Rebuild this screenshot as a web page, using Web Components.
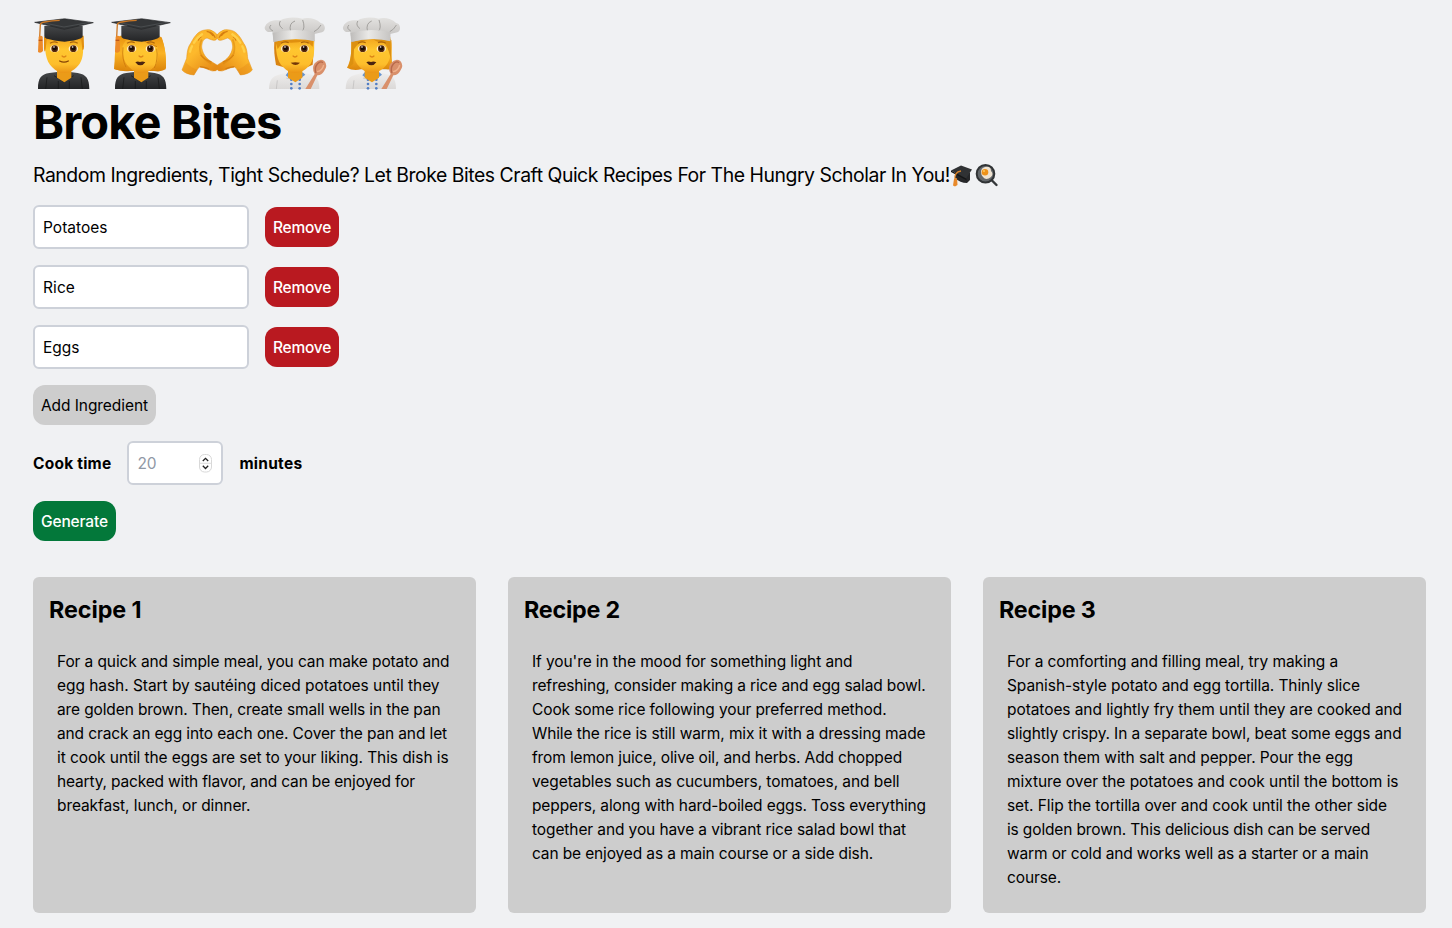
<!DOCTYPE html>
<html lang="en">
<head>
<meta charset="utf-8">
<title>Broke Bites</title>
<style>
body{margin:0;background:#f0f1f3;color:#000;font-family:Inter,"Liberation Sans",sans-serif;}
</style>
</head>
<body>
<bites-app></bites-app>

<template id="t-app">
<style>
:host{display:flex;flex-direction:column;align-items:flex-start;box-sizing:border-box;height:928px;padding:10px 26px 15px 33px;font-size:15.5px;line-height:24px;--drop:1px}
.emojis{display:flex;margin-left:-8px;height:85px}
h1{margin:3px 0 0;font-size:47px;line-height:48px;font-weight:750;--drop:0px}
.sub{display:flex;align-items:center;height:28px;margin:15px 0 16px;font-size:19.4px;line-height:28px;--drop:0px}
form{display:flex;flex-direction:column;align-items:flex-start;gap:16px;margin:0}
.row{display:flex;align-items:center;gap:16px;font-weight:700}
.grid{display:grid;grid-template-columns:repeat(3,1fr);gap:32px;width:100%;margin-top:36px;flex:1}
</style>
<div class="emojis">
<emoji-pic kind="grad-man"></emoji-pic><emoji-pic kind="grad-woman"></emoji-pic><emoji-pic kind="hands"></emoji-pic><emoji-pic kind="cook"></emoji-pic><emoji-pic kind="cook-woman"></emoji-pic>
</div>
<h1><fit-line width="248.500">Broke Bites</fit-line></h1>
<div class="sub"><fit-line width="917">Random Ingredients, Tight Schedule? Let Broke Bites Craft Quick Recipes For The Hungry Scholar In You!</fit-line><emoji-pic kind="cap"></emoji-pic><emoji-pic kind="pan"></emoji-pic></div>
<form>
<ingredient-row>Potatoes</ingredient-row>
<ingredient-row>Rice</ingredient-row>
<ingredient-row>Eggs</ingredient-row>
<app-button tone="gray"><fit-line width="107">Add Ingredient</fit-line></app-button>
<div class="row"><fit-line width="78.4">Cook time</fit-line><number-box>20</number-box><fit-line width="63">minutes</fit-line></div>
<app-button tone="green"><fit-line width="67">Generate</fit-line></app-button>
</form>
<div class="grid">
<recipe-card><fit-line slot="title" width="92.5">Recipe 1</fit-line>
<fit-line width="392.5">For a quick and simple meal, you can make potato and</fit-line>
<fit-line width="382.5">egg hash. Start by sautéing diced potatoes until they</fit-line>
<fit-line width="383.5">are golden brown. Then, create small wells in the pan</fit-line>
<fit-line width="390">and crack an egg into each one. Cover the pan and let</fit-line>
<fit-line width="391.5">it cook until the eggs are set to your liking. This dish is</fit-line>
<fit-line width="358">hearty, packed with flavor, and can be enjoyed for</fit-line>
<fit-line width="193.5">breakfast, lunch, or dinner.</fit-line>
</recipe-card>
<recipe-card><fit-line slot="title" width="96">Recipe 2</fit-line>
<fit-line width="320.5">If you're in the mood for something light and</fit-line>
<fit-line width="393.5">refreshing, consider making a rice and egg salad bowl.</fit-line>
<fit-line width="354.5">Cook some rice following your preferred method.</fit-line>
<fit-line width="393.5">While the rice is still warm, mix it with a dressing made</fit-line>
<fit-line width="370">from lemon juice, olive oil, and herbs. Add chopped</fit-line>
<fit-line width="367.5">vegetables such as cucumbers, tomatoes, and bell</fit-line>
<fit-line width="394">peppers, along with hard-boiled eggs. Toss everything</fit-line>
<fit-line width="374">together and you have a vibrant rice salad bowl that</fit-line>
<fit-line width="341">can be enjoyed as a main course or a side dish.</fit-line>
</recipe-card>
<recipe-card><fit-line slot="title" width="96.5">Recipe 3</fit-line>
<fit-line width="331">For a comforting and filling meal, try making a</fit-line>
<fit-line width="353">Spanish-style potato and egg tortilla. Thinly slice</fit-line>
<fit-line width="395">potatoes and lightly fry them until they are cooked and</fit-line>
<fit-line width="394.5">slightly crispy. In a separate bowl, beat some eggs and</fit-line>
<fit-line width="346">season them with salt and pepper. Pour the egg</fit-line>
<fit-line width="391.5">mixture over the potatoes and cook until the bottom is</fit-line>
<fit-line width="380">set. Flip the tortilla over and cook until the other side</fit-line>
<fit-line width="363">is golden brown. This delicious dish can be served</fit-line>
<fit-line width="361.5">warm or cold and works well as a starter or a main</fit-line>
<fit-line width="54">course.</fit-line>
</recipe-card>
</div>
</template>

<script>
const define=(name,markup,setup)=>customElements.define(name,class extends HTMLElement{
  connectedCallback(){
    if(this.shadowRoot)return;
    this.attachShadow({mode:"open"}).innerHTML=typeof markup==="function"?markup(this):markup;
    if(setup)setup(this);
  }
});

/* One line of text, tracked to a given advance width. */
define("fit-line",`<style>:host{display:block;white-space:nowrap}span{display:inline-block;transform:translateY(var(--drop,0px))}</style><span><slot></slot></span>`,el=>{
  const s=el.shadowRoot.querySelector("span"),n=el.textContent.length;
  el.fit=()=>{s.style.letterSpacing="0";const w=s.getBoundingClientRect().width;if(w)s.style.letterSpacing=((+el.getAttribute("width")-w)/n).toFixed(4)+"px"};
});

define("app-button",`<style>
:host{display:block}
button{display:block;margin:0;border:0;border-radius:12px;padding:8px;height:40px;font:inherit;line-height:24px;font-weight:550;color:#fff;background:#b91920}
:host([tone=gray]) button{background:#cdcdcd;color:#000;font-weight:400}
:host([tone=green]) button{background:#03783a}
</style><button type="button"><slot></slot></button>`);

define("ingredient-row",el=>{
  const text=el.textContent,w={Potatoes:64.5,Rice:32,Eggs:36.5}[text];
  return `<style>
:host{display:flex;align-items:center;gap:16px}
.field{box-sizing:border-box;width:216px;height:44px;border:2px solid #cdd1d9;border-radius:6px;background:#fff;padding:8px}
</style><div class="field"><fit-line width="${w}">${text}</fit-line></div><app-button><fit-line width="58">Remove</fit-line></app-button>`});

define("number-box",`<style>
:host{display:flex;box-sizing:border-box;width:96px;height:44px;border:2px solid #cdd1d9;border-radius:6px;background:#fff;padding:8px;color:#9098a5;font-weight:400;justify-content:space-between;align-items:center}
span{display:block;transform:translateY(1px)}
svg{display:block;width:15px;height:20px}
</style><span><slot></slot></span><svg viewBox="0 0 15 20"><rect x="1.5" y="1.500" width="12" height="17.5" rx="5" fill="#fff" stroke="#d8d8d8" stroke-width="1"/><path d="M1.5 10.300h12" stroke="#ddd"/><path d="M4.8 8l2.700-2.700 2.700 2.700M4.8 12.800l2.700 2.700 2.700-2.700" fill="none" stroke="#222" stroke-width="1.3"/></svg>`);

define("recipe-card",`<style>
:host{display:block;box-sizing:border-box;background:#cdcdcd;border-radius:6px;padding:16px}
h2{margin:0 0 16px;font-size:23.3px;line-height:32px;font-weight:700}
div{padding:8px}
</style><h2><slot name="title"></slot></h2><div><slot></slot></div>`);

const defs=`<defs>
<linearGradient id="skin" x2="0" y2="1"><stop offset="0" stop-color="#f2a31d"/><stop offset=".35" stop-color="#ffc62f"/><stop offset=".75" stop-color="#fdbe2c"/><stop offset="1" stop-color="#ea9415"/></linearGradient>
<linearGradient id="hair" x2="0" y2="1"><stop offset="0" stop-color="#e8940f"/><stop offset=".5" stop-color="#fbb324"/><stop offset="1" stop-color="#dc860c"/></linearGradient>
<linearGradient id="dark" x2="0" y2="1"><stop offset="0" stop-color="#444648"/><stop offset="1" stop-color="#232426"/></linearGradient>
<linearGradient id="hat" x2="0" y2="1"><stop offset="0" stop-color="#e3e2e0"/><stop offset=".65" stop-color="#cbc9c7"/><stop offset="1" stop-color="#b0adaa"/></linearGradient>
<linearGradient id="band"><stop offset="0" stop-color="#bebcba"/><stop offset=".45" stop-color="#eae9e7"/><stop offset="1" stop-color="#c6c4c2"/></linearGradient>
<linearGradient id="coat" x2="0" y2="1"><stop offset="0" stop-color="#efeeed"/><stop offset="1" stop-color="#dbd9d8"/></linearGradient>
<linearGradient id="hand" x2=".7" y2="1"><stop offset="0" stop-color="#f9b42a"/><stop offset=".5" stop-color="#fdb92c"/><stop offset="1" stop-color="#e58a16"/></linearGradient>
</defs>`;
const eyes=`<g><ellipse cx="89" cy="116" rx="14" ry="11" fill="#fff0cc"/><ellipse cx="145" cy="116" rx="14" ry="11" fill="#fff0cc"/><circle cx="89" cy="116" r="10" fill="#5b2b0d"/><circle cx="145" cy="116" r="10" fill="#5b2b0d"/><circle cx="89" cy="115" r="6.5" fill="#180d08"/><circle cx="145" cy="115" r="6.5" fill="#180d08"/><circle cx="87" cy="111" r="2.4" fill="#fff"/><circle cx="143" cy="111" r="2.4" fill="#fff"/><path d="M110 137q7 8 14 0" fill="none" stroke="#dc8517" stroke-width="4"/></g>`;
const brows=`<path d="M75 100q12-8 23-2M135 98q12-6 23 2" fill="none" stroke="#ab640b" stroke-width="3.5"/>`;
const smile=`<path d="M104 153q13 7 26 0" fill="none" stroke="#864306" stroke-width="4" stroke-linecap="round"/>`;
const lips=`<path d="M97 157q7-5 14-1 7-4 16 1-6 9-15 9t-15-9z" fill="#4a2410"/>`;
const face=`<path d="M96 175h43v28l-21 14-22-14z" fill="#eb9b18"/><path d="M60 82C58 119 62 154 81 171 95 184 105 190 117 189 139 187 151 178 164 161 176 145 176 115 173 82z" fill="url(#skin)"/>`;
const gown=`<path d="M39 237c0-34 10-44 34-48l24-3 19 25 19-25 23 3c25 4 35 17 35 48z" fill="url(#dark)"/><path d="M66 202l-4 35M168 202l4 35M87 197l29 18 30-18M100 213v24M133 213v24" fill="none" stroke="#151617" stroke-width="2"/><path d="M96 184l21 27 20-27z" fill="#efa31e"/>`;
const cap=`<path d="M58 48v30q1 8 12 9 20 5 35 7l14 1 15-2q27-3 39-12V48z" fill="url(#dark)"/><path d="M29 37l83-10q7-1 13 0l80 11-87 20z" fill="#343638" stroke="#242527" stroke-width="2"/><path d="M43 36l74 15 77-14" fill="none" stroke="#55585a" stroke-width="2"/><path d="M104 31q-23 1-45 5-12 2-13 8l-2 37" fill="none" stroke="#cd7926" stroke-width="4"/><path d="M41 80q7-5 12 0l1 43q-7 8-15 3z" fill="#ed8a29"/><path d="M41 91h11" stroke="#bd5718" stroke-width="4"/>`;
const chefHat=`<path d="M49 65C30 71 22 54 28 48 34 33 54 29 73 31 91 21 117 20 139 26 156 21 180 25 194 39 208 40 212 62 198 67L175 72v20q-60-12-121 3z" fill="url(#hat)"/><path d="M51 63Q35 55 45 45M80 56Q65 46 73 33M104 65q-7-25 13-32M137 65q12-10 3-35M174 65q12-5 21-20" fill="none" stroke="#a19f9c" stroke-width="3"/><path d="M50 69q62-17 126-2v27q-60-15-124 2z" fill="url(#band)"/>`;
const coat=`<path d="M39 237c1-29 11-38 29-43l28-7 22 21 22-21 28 7c16 7 22 18 22 43z" fill="url(#coat)"/><path d="M96 187l12 11 11 5 10-5 11-11 8 7-17 13-14-4-13 4-15-11z" fill="#6594d0"/><path d="M91 204q13 5 45 2M64 211l-3 26" fill="none" stroke="#bbbab9" stroke-width="2"/><g fill="#527ec4"><circle cx="106" cy="209" r="4"/><circle cx="131" cy="209" r="4"/><circle cx="106" cy="222" r="4"/><circle cx="131" cy="222" r="4"/><circle cx="106" cy="235" r="4"/><circle cx="131" cy="235" r="4"/></g>`;
const spoon=`<path d="M148 237l28-45q-10-17 0-32 15-17 29-7 12 13-1 31-8 13-20 12l-20 41z" fill="#d9906b"/><path d="M180 189q-6-15 4-27 9-10 17-4" fill="none" stroke="#b8694b" stroke-width="4"/><path d="M183 185q16-2 20-20" fill="none" stroke="#f0b18c" stroke-width="4"/>`;
const hand=`<path d="M12 180L26 145C27 132 28 113 38 100 51 75 63 62 80 60q17-4 29 6 9 5 10 14-2 12-13 11-11-3-19-7C74 88 72 98 71 111c2 14 8 28 22 39 8 5 15 10 24 15q7 10-3 17-10 4-25-4-13-6-24-7-6 5-10 12l-7 12q-25-2-36-15z" fill="url(#hand)" stroke="#e38f17" stroke-width="1.5"/><path d="M86 64q12 2 19 14M95 65q10 4 17 18M68 135q11 14 32 21M66 170q19 2 27 8M70 80q-7 3-9 12" fill="none" stroke="#d67e10" stroke-width="3.5"/><path d="M71 88q-9 22-3 43 10 19 32 30" fill="none" stroke="#d9850f" stroke-opacity=".55" stroke-width="5"/><path d="M48 98q9-15 24-25M36 125q2-10 6-16" fill="none" stroke="#ffd04a" stroke-width="7" stroke-linecap="round"/><path d="M14 179l10-21q17 16 35 21l-11 16q-22-2-34-16z" fill="#e38716" fill-opacity=".35"/>`;
const art={
"grad-man":[0,`${gown}${face}<path d="M57 80v37q2 15 5 1l3-30h104l3 31q4 5 5-9l-1-33z" fill="#e2900f"/>${eyes}${brows}${smile}${cap}`],
"grad-woman":[0,`<path d="M52 77C39 101 39 141 33 177q25 9 48 6h72q20 4 35-5c3-30-1-71-15-98z" fill="url(#hair)"/><g transform="translate(-3 0)">${gown}${face}</g><path d="M50 79l26 5q-18 15-20 38-3 34 12 55-14 8-34 0c2-30-1-57 12-98zM108 80q20 20 55 30 7 35-8 66 18 9 34-2c1-42-4-66-13-92z" fill="url(#hair)"/><path d="M110 84q24 18 52 26M60 112q-4 35 9 60M161 116q5 33-7 58" fill="none" stroke="#cc7a0c" stroke-width="2.500"/><g transform="translate(-3 0)">${eyes}${brows}</g>${lips}<g transform="translate(-3 0)">${cap}</g>`],
"hands":[9,`${hand}<g transform="translate(235 0) scale(-1 1)">${hand}</g>`],
"cook":[9,`<path d="M55 92c-2 28 1 50 5 73l21 6h74l15-7 5-74z" fill="#d98412"/>${coat}${face}<path d="M57 90h115l-2 20q-10-10-22-17-35 8-68 3L65 117z" fill="#e0900f"/>${eyes}${brows}<path d="M104 158q14-3 28 0-13 14-28 0z" fill="#733708"/>${chefHat}${spoon}`],
"cook-woman":[9,`<path d="M52 90c1 36-1 62-13 83q17 10 42 5h75q20 2 22-8c-9-18-2-49-6-80z" fill="url(#hair)"/><g transform="translate(-4 0)">${coat}${face}</g><path d="M52 90h48q-28 6-40 28l-2 43-15 12c10-32 9-56 9-83zM117 88h53l2 67q-6-35-20-56-21 0-35-11z" fill="#dc9010"/><g transform="translate(-3 0)">${eyes}${brows}</g>${lips}<g transform="translate(2 0) scale(.95 1)">${chefHat}</g><g transform="translate(-6 0)">${spoon}</g>`]};
define("emoji-pic",el=>{
  const k=el.getAttribute("kind");
  if(k==="cap")return `<style>:host{display:block}svg{display:block}</style><svg width="25" height="28" viewBox="0 0 25 28"><path d="M5 11v6q5 5 12 5l3-3v-7z" fill="#262729"/><path d="M1 9.500l10-5 11 4-6 9z" fill="#303234"/><path d="M1 9.500l15 8 1 2-2-1L1 11z" fill="#151617"/><path d="M11 10Q4 11 5 19" fill="none" stroke="#db842a" stroke-width="1.3"/><path d="M4 18l3-1 .5 7-2.500 1.500-2-1z" fill="#e8892b"/></svg>`;
  if(k==="pan")return `<style>:host{display:block}svg{display:block}</style><svg width="25" height="28" viewBox="0 0 25 28"><path d="M15.5 18l6 6" stroke="#35383a" stroke-width="2.400" stroke-linecap="round"/><circle cx="10.500" cy="12.800" r="8.800" fill="#63676a" stroke="#303335" stroke-width="2"/><path d="M6 11q0-4 4-5 6-1 6 4 3 3 0 6-5 4-8 0-2-2-2-5z" fill="#efe3d2"/><circle cx="10" cy="11.300" r="3.300" fill="#ee9219"/><circle cx="9" cy="10" r="1" fill="#ffc95c"/></svg>`;
  const [x,body]=art[k];
  return `<style>:host{display:block;width:78px;height:85px}svg{display:block}</style><svg width="78" height="85" viewBox="${x} 0 234 255">${defs}<g>${body}</g></svg>`;
});

define("bites-app",document.getElementById("t-app").innerHTML);

const fitAll=root=>root.querySelectorAll("*").forEach(e=>{if(e.fit)e.fit();if(e.shadowRoot)fitAll(e.shadowRoot)});
fitAll(document);
</script>
</body>
</html>
